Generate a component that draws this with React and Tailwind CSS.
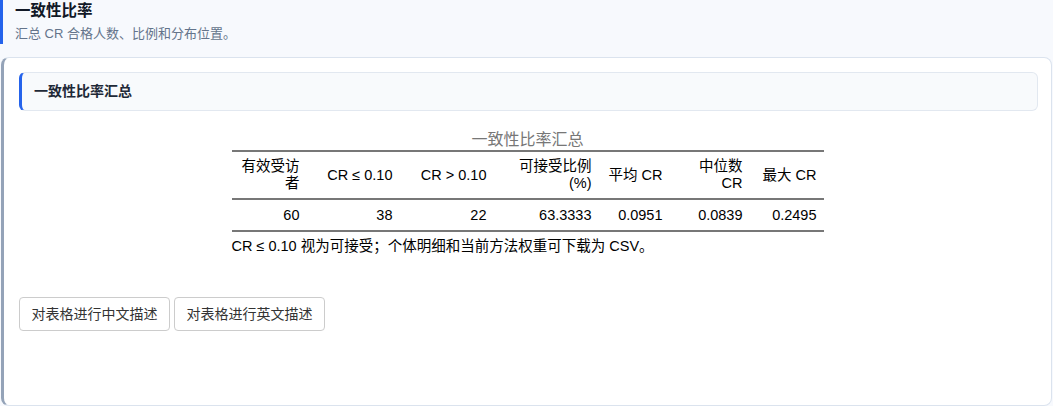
export default function App() {
  const font = { fontFamily: '"Liberation Sans", "Noto Sans CJK SC", sans-serif' };
  const cols = [
    { h: "有效受访者", v: "60", w: "w-[75px]" },
    { h: "CR ≤ 0.10", v: "38", w: "w-[93px]" },
    { h: "CR > 0.10", v: "22", w: "w-[94px]" },
    { h: "可接受比例 (%)", v: "63.3333", w: "w-[105px]" },
    { h: "平均 CR", v: "0.0951", w: "w-[71px]" },
    { h: "中位数 CR", v: "0.0839", w: "w-[80px]" },
    { h: "最大 CR", v: "0.2495", w: "w-[74px]" },
  ];
  return (
    <div className="w-[1053px] h-[406px] bg-[#f7f9fd] overflow-hidden" style={font}>
      <div className="border-l-[3px] border-[#2563eb] pl-[12px] pt-[1px] h-[44px]">
        <div className="text-[15.5px] leading-[20px] font-bold text-[#111827]">一致性比率</div>
        <div className="mt-[3px] text-[13px] leading-[20px] text-[#64748b]">汇总 CR 合格人数、比例和分布位置。</div>
      </div>
      <div className="mt-[13px] ml-[1px] w-[1051px] h-[349px] bg-white border border-[#dbe3ee] border-l-[3px] border-l-[#94a3b8] rounded-[8px] pl-[15px] pr-[13px] pt-[14px]">
        <div className="h-[39px] bg-[#f8fafc] border border-[#e2e8f0] border-l-[3px] border-l-[#2563eb] rounded-[6px] pl-[12px] flex items-center">
          <span className="text-[14px] font-bold text-[#1f2937]">一致性比率汇总</span>
        </div>
        <div className="mt-[19px] flex justify-center pr-[2px]">
          <div>
            <table className="border-collapse table-fixed w-[592px] text-[14.5px] text-black">
              <caption className="text-[16px] leading-[20px] text-[#777]">一致性比率汇总</caption>
              <thead>
                <tr className="border-t-2 border-b-2 border-[#777]">
                  {cols.map((c) => (
                    <th key={c.h} className={`${c.w} font-normal text-right align-middle px-[7px] py-[6px] leading-[17px] h-[46px]`}>
                      {c.h}
                    </th>
                  ))}
                </tr>
              </thead>
              <tbody>
                <tr className="border-b-2 border-[#777]">
                  {cols.map((c) => (
                    <td key={c.h} className="text-right px-[7px] py-[6px] leading-[18px]">
                      {c.v}
                    </td>
                  ))}
                </tr>
              </tbody>
            </table>
            <div className="mt-[4px] text-[14.5px] leading-[20px] text-black">
              CR ≤ 0.10 视为可接受；个体明细和当前方法权重可下载为 CSV。
            </div>
          </div>
        </div>
        <div className="mt-[41px] flex gap-[4px]">
          <button className="h-[34px] px-[11.5px] border border-[#ccc] rounded-[4px] bg-white text-[14px] text-[#333]">对表格进行中文描述</button>
          <button className="h-[34px] px-[11.5px] border border-[#ccc] rounded-[4px] bg-white text-[14px] text-[#333]">对表格进行英文描述</button>
        </div>
      </div>
    </div>
  );
}
